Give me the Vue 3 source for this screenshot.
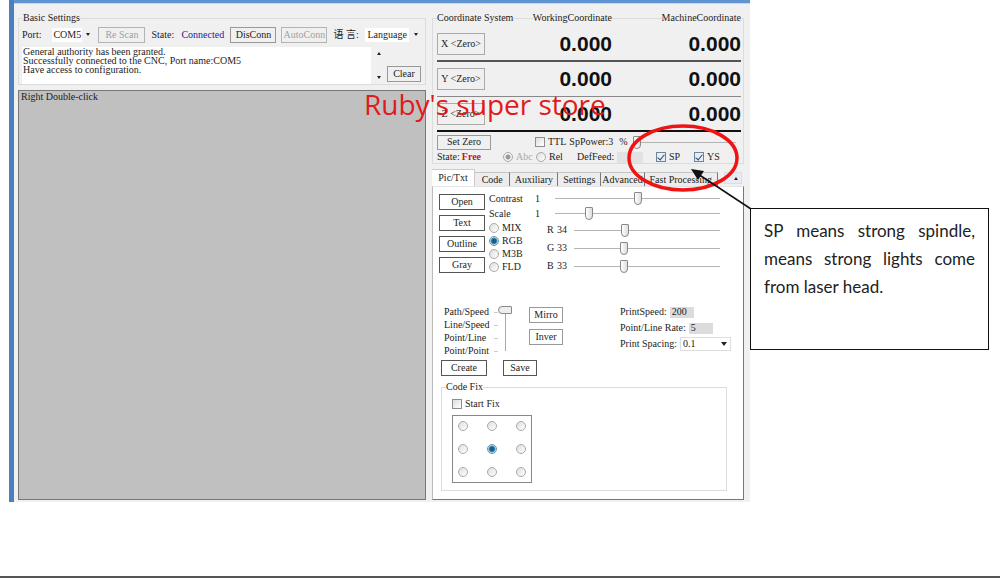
<script setup>
import { ref } from 'vue'

const log = ref(
  'General authority has been granted.\nSuccessfully connected to the CNC, Port name:COM5\nHave access to configuration.'
)
const axes = ['X', 'Y', 'Z']
const tabs = ['Pic/Txt', 'Code', 'Auxiliary', 'Settings', 'Advanced', 'Fast Processing']
const activeTab = ref('Pic/Txt')
const sources = ['Open', 'Text', 'Outline', 'Gray']
const modes = ['MIX', 'RGB', 'M3B', 'FLD']
const mode = ref('RGB')
const adjust = ref([
  { name: 'Contrast', value: 1, pos: 50 },
  { name: 'Scale', value: 1, pos: 19 }
])
const channels = ref([
  { name: 'R', value: 34 },
  { name: 'G', value: 33 },
  { name: 'B', value: 33 }
])
const paths = ['Path/Speed', 'Line/Speed', 'Point/Line', 'Point/Point']
const anchor = ref(5)
const power = ref(0)
const pathLevel = ref(3)
const motion = ref('')
const ttl = ref(false)
const sp = ref(true)
const ys = ref(true)
const startFix = ref(false)
</script>

<template>
  <div class="page">
    <main class="sheet">
      <div class="window">
        <div class="left">
          <section class="group basic">
            <header class="group-head"><h2>Basic Settings</h2></header>
            <div class="port-row">
              <label for="port">Port:</label>
              <span class="combo port">
                <select id="port"><option>COM5</option></select>
                <i class="caret"></i>
              </span>
              <button class="btn scan" disabled>Re Scan</button>
              <span class="state">State:</span>
              <span class="connected">Connected</span>
              <button class="btn conn">DisConn</button>
              <button class="btn conn" disabled>AutoConn</button>
              <label for="lang" class="lang-label">语 言:</label>
              <span class="combo lang">
                <select id="lang"><option>Language</option></select>
                <i class="caret"></i>
              </span>
            </div>
            <div class="log-row">
              <textarea v-model="log" aria-label="Log" readonly></textarea>
              <div class="scroll"><i class="caret up"></i><i class="caret"></i></div>
              <button class="btn clear">Clear</button>
            </div>
          </section>
          <div class="canvas">Right Double-click</div>
        </div>

        <div class="right">
          <section class="group coords">
            <header class="group-head">
              <h2>Coordinate System</h2>
              <span>WorkingCoordinate</span>
              <span>MachineCoordinate</span>
            </header>
            <div v-for="a in axes" :key="a" class="axis">
              <button class="btn zero">{{ a }} &lt;Zero&gt;</button>
              <output>0.000</output>
              <output>0.000</output>
            </div>
            <div class="power-row">
              <button class="btn set-zero">Set Zero</button>
              <label class="opt"><input v-model="ttl" type="checkbox" />TTL</label>
              <label for="power" class="power-label">SpPower:</label>
              <span class="num">3</span>
              <span class="pct">%</span>
              <input id="power" v-model="power" type="range" class="range" />
            </div>
            <div class="state-row">
              <span>State:<b class="free">Free</b></span>
              <label class="opt abs"><input v-model="motion" type="radio" name="motion" value="abc" disabled class="dim" />Abc</label>
              <label class="opt rel"><input v-model="motion" type="radio" name="motion" value="rel" />Rel</label>
              <label for="feed" class="feed-label">DefFeed:</label>
              <input id="feed" class="field feed" />
              <label class="opt sp"><input v-model="sp" type="checkbox" />SP</label>
              <label class="opt"><input v-model="ys" type="checkbox" />YS</label>
            </div>
          </section>

          <nav class="tabs" role="tablist">
            <button
              v-for="t in tabs"
              :key="t"
              role="tab"
              :aria-selected="activeTab === t"
              :class="['tab', { active: activeTab === t }]"
              @click="activeTab = t"
            >{{ t }}</button>
            <button class="tab-next" aria-label="Next tabs"><i class="caret up"></i></button>
          </nav>

          <section class="panel">
            <div class="image-tools">
              <div class="sources">
                <button v-for="s in sources" :key="s" class="btn strong">{{ s }}</button>
              </div>
              <div class="settings">
                <label v-for="a in adjust" :key="a.name" class="adjust">
                  <span>{{ a.name }}</span><span>{{ a.value }}</span>
                  <input v-model="a.pos" type="range" class="range" />
                </label>
                <div class="colours">
                  <div class="modes">
                    <label v-for="m in modes" :key="m" class="opt">
                      <input v-model="mode" type="radio" name="mode" :value="m" />{{ m }}
                    </label>
                  </div>
                  <div class="channels">
                    <label v-for="c in channels" :key="c.name" class="channel">
                      <span>{{ c.name }}</span><span>{{ c.value }}</span>
                      <input v-model="c.value" type="range" class="range" />
                    </label>
                  </div>
                </div>
              </div>
            </div>

            <div class="print-tools">
              <div class="paths"><span v-for="p in paths" :key="p">{{ p }}</span></div>
              <div class="ticks"><i v-for="p in paths" :key="p"></i></div>
              <input v-model="pathLevel" type="range" min="0" max="3" class="vertical" aria-label="Path mode" />
              <div class="flips">
                <button class="btn">Mirro</button>
                <button class="btn">Inver</button>
              </div>
              <div class="print">
                <div><label for="speed">PrintSpeed:</label><input id="speed" class="field" value="200" /></div>
                <div><label for="rate">Point/Line Rate:</label><input id="rate" class="field" value="5" /></div>
                <div>
                  <label for="spacing">Print Spacing:</label>
                  <span class="combo spacing">
                    <select id="spacing"><option>0.1</option></select>
                    <i class="caret big"></i>
                  </span>
                </div>
              </div>
            </div>

            <div class="actions">
              <button class="btn strong create">Create</button>
              <button class="btn strong save">Save</button>
            </div>

            <section class="group fix">
              <header class="group-head"><h2>Code Fix</h2></header>
              <label class="opt"><input v-model="startFix" type="checkbox" />Start Fix</label>
              <div class="anchors">
                <input v-for="n in 9" :key="n" v-model="anchor" type="radio" name="anchor" :value="n" :aria-label="'Anchor ' + n" />
              </div>
            </section>
          </section>
        </div>
      </div>

      <aside class="callout">SP means strong spindle, means strong lights come from laser head.</aside>

      <p class="watermark">Ruby's super store</p>
      <svg class="marks" viewBox="0 0 160 100" aria-hidden="true">
        <ellipse cx="63" cy="38" rx="54" ry="32" fill="none" stroke="#ef1414" stroke-width="3.500" />
        <path d="M78 54 L131 89" stroke="#111" stroke-width="1.500" />
        <path d="M71 49 L84 51 L78 60 Z" fill="#111" />
      </svg>
    </main>
    <hr class="rule" />
  </div>
</template>

<style>
body {
  background: #fff;
}
</style>

<style scoped>
.page {
  min-height: 100vh;
  display: flex;
  flex-direction: column;
  justify-content: space-between;
  font: 10px/12px "Liberation Serif", "Noto Sans CJK SC", serif;
  color: #1c1c1c;
}
.page * {
  box-sizing: border-box;
}
.sheet {
  position: relative;
  display: grid;
  grid-template-columns: minmax(0, 741fr) minmax(0, 239fr);
  align-items: start;
  padding: 0 11px 0 9px;
}
.window {
  min-width: 0;
  display: grid;
  grid-template-columns: 408fr 312fr;
  column-gap: 6px;
  padding: 14px 6px 2px 4px;
  background: #f0f0f0;
  border-left: 5px solid #4a80c0;
  box-shadow: inset 0 3px #5f93d2, inset 0 4px #c5d8ee;
}
.left,
.right {
  min-width: 0;
  display: flex;
  flex-direction: column;
}
h2 {
  margin: 0;
  font: inherit;
}
button,
input,
select,
textarea {
  font: inherit;
  color: inherit;
  margin: 0;
}
.group {
  border: 1px solid #dcdcdc;
  margin-top: 4px;
}
.group-head {
  display: flex;
  margin-top: -7px;
  padding-left: 4px;
}
.group-head > * {
  background: #f0f0f0;
}
.btn {
  height: 16px;
  padding: 0;
  line-height: 12px;
  text-align: center;
  white-space: nowrap;
  background: transparent;
  border: 1px solid #999;
}
.btn:disabled {
  color: #a0a0a0;
  border-color: #b4b4b4;
}
.btn.strong {
  border-color: #555;
}
.caret {
  width: 0;
  height: 0;
  border: 2px solid transparent;
  border-top: 3px solid #222;
  border-bottom: 0;
}
.caret.up {
  border-top: 0;
  border-bottom: 3px solid #222;
}
.caret.big {
  border-width: 4px 3px 0;
}
.combo {
  display: flex;
  align-items: center;
  justify-content: space-between;
}
select {
  appearance: none;
  border: 0;
  border-radius: 0;
  padding: 0 2px;
  height: 14px;
  background: #fff;
}

/* Basic settings */
.basic {
  height: 67px;
  padding: 0 4px 0 3px;
}
.port-row {
  display: flex;
  align-items: center;
  height: 21px;
  white-space: nowrap;
}
.basic .group-head {
  padding-left: 1px;
}
.port {
  width: 38px;
  margin: 0 8px 0 11px;
}
.port select {
  width: 30px;
  padding: 0 0 0 1px;
}
.scan {
  width: 47px;
}
.state {
  margin: 0 6px;
  width: 24px;
}
.connected {
  color: #1a1a9c;
  width: 49px;
}
.conn {
  width: 46px;
  margin-right: 5px;
}
.lang-label {
  width: 32px;
  margin-left: 1px;
}
.lang {
  flex: 1;
  padding-right: 3px;
}
.lang select {
  width: 44px;
}
.log-row {
  display: flex;
  height: 37px;
  margin-top: 2px;
}
textarea {
  flex: 1;
  min-width: 0;
  border: 0;
  padding: 0 1px;
  resize: none;
  overflow: hidden;
  background: #fff;
  line-height: 9px;
  outline: 0;
}
.scroll {
  width: 16px;
  display: flex;
  flex-direction: column;
  align-items: center;
  justify-content: space-between;
  padding: 5px 0;
}
.clear {
  width: 34px;
  align-self: flex-end;
  margin-bottom: 2px;
}
.canvas {
  flex: 1;
  margin-top: 5px;
  padding: 0 2px;
  background: #c0c0c0;
  border: 1px solid #777;
}

/* Coordinates */
.coords {
  height: 146px;
  padding: 0 2px 0 4px;
}
.coords .group-head {
  display: grid;
  grid-template-columns: 90fr 85fr 129fr;
  padding-left: 0;
  margin-bottom: 3px;
}
.group-head span {
  justify-self: end;
}
.group-head h2 {
  justify-self: start;
}
.axis {
  display: grid;
  grid-template-columns: 48fr 127fr 129fr;
  height: 35px;
  align-items: center;
  border-bottom: 2px solid #555;
}
.axis:nth-child(3) {
  border-bottom: 1px solid #888;
}
.axis:nth-child(4) {
  border-color: #111;
}
.zero {
  width: 48px;
  height: 22px;
  border-color: #aaa;
}
output {
  text-align: right;
  font: bold 21px/24px "Liberation Sans", sans-serif;
  color: #111;
}
.power-row,
.state-row {
  display: flex;
  align-items: center;
  white-space: nowrap;
}
.power-row {
  height: 20px;
  padding-right: 5px;
}
.set-zero {
  width: 54px;
  height: 15px;
  margin-right: 44px;
}
.power-label {
  width: 39px;
  margin-left: 3px;
}
.num {
  width: 11px;
}
.pct {
  width: 14px;
}
.opt {
  display: flex;
  align-items: center;
  gap: 3px;
}
input[type="checkbox"],
input[type="radio"] {
  appearance: none;
  flex: none;
  width: 10px;
  height: 10px;
  border: 1px solid #8e8e8e;
  background: linear-gradient(135deg, #ddd, #fff);
}
input[type="radio"] {
  border-radius: 50%;
  border-color: #aaa;
}
input[type="radio"]:checked {
  border-color: #6f93a8;
  background: radial-gradient(#155f8e 2px, #4f9cc4 3px, #e4f1f7 4px);
}
input[type="radio"].dim {
  background: radial-gradient(#999 2px, #f4f4f4 3px);
  border-color: #aaa;
}
input[type="checkbox"]:checked {
  display: grid;
  place-items: center;
  border-color: #6c8599;
  background: #e6edf3;
}
input[type="checkbox"]:checked::before {
  content: "";
  width: 3px;
  height: 6px;
  margin-bottom: 2px;
  border: solid #2b4871;
  border-width: 0 1px 1px 0;
  transform: rotate(40deg);
}
.state-row {
  height: 10px;
}
.state-row > :first-child {
  width: 66px;
}
.free {
  color: #c41818;
  margin-left: 2px;
}
.abs {
  width: 33px;
  color: #aaa;
}
.rel {
  width: 41px;
}
.feed-label {
  width: 40px;
}
.field {
  border: 0;
  border-radius: 0;
  padding: 0 2px;
  width: 24px;
  height: 11px;
  background: #dcdcdc;
}
.feed {
  width: 26px;
  background: #e2e2e2;
}
.sp {
  margin-left: 13px;
  width: 38px;
}

/* Sliders */
.range {
  appearance: none;
  flex: 1;
  min-width: 0;
  height: 14px;
  background: linear-gradient(#b4b4b4, #b4b4b4) center / 100% 1px no-repeat;
}
.range::-webkit-slider-thumb {
  appearance: none;
  width: 8px;
  height: 13px;
  border: 1px solid #888;
  border-radius: 1px 1px 4px 4px;
  background: linear-gradient(90deg, #fff, #ddd);
}

/* Tabs */
.tabs {
  display: flex;
  align-items: flex-end;
  height: 18px;
  margin-top: 4px;
}
.tab {
  height: 14px;
  padding: 0;
  white-space: nowrap;
  border: 1px solid #c4c4c4;
  border-width: 1px 1px 0 0;
  border-right-color: #777;
  background: #ededed;
  flex: 43 1 0;
}
.tab.active {
  height: 17px;
  background: #fff;
  border-color: #ccc;
}
.tab:nth-child(2) {
  flex-grow: 35;
}
.tab:nth-child(3) {
  flex-grow: 48;
}
.tab:nth-child(6) {
  flex-grow: 74;
}
.tab-next {
  width: 18px;
  height: 12px;
  margin: 0 2px 2px 6px;
  padding: 0 3px 0 0;
  display: flex;
  align-items: center;
  justify-content: flex-end;
  border: 1px solid #ddd;
  background: #e8ecf2;
}
.panel {
  flex: 1;
  padding: 7px 6px 8px;
  background: #fff;
  border: 1px solid #bbb;
  border-top-color: #e4e4e4;
  border-right-color: #777;
  border-bottom-color: #777;
}
.image-tools {
  display: flex;
  gap: 4px;
}
.sources {
  display: flex;
  flex-direction: column;
  gap: 5px;
  width: 46px;
}
.settings {
  flex: 1;
  padding-right: 17px;
  margin-top: -3px;
}
.adjust {
  display: flex;
  align-items: center;
  height: 15px;
}
.adjust > :first-child {
  width: 46px;
}
.adjust > :nth-child(2) {
  width: 20px;
}
.colours {
  display: flex;
}
.modes {
  width: 58px;
}
.modes .opt {
  height: 13px;
}
.channels {
  flex: 1;
}
.channel {
  display: flex;
  align-items: center;
  height: 18px;
}
.channel > :first-child {
  width: 10px;
}
.channel > :nth-child(2) {
  width: 17px;
}
.print-tools {
  display: flex;
  margin-top: 31px;
  padding: 0 6px 0 5px;
}
.paths {
  width: 50px;
  display: grid;
  grid-auto-rows: 13px;
}
.ticks {
  width: 4px;
  display: grid;
  grid-auto-rows: 13px;
}
.ticks i {
  align-self: center;
  height: 1px;
  background: #ccc;
}
.vertical {
  appearance: none;
  writing-mode: vertical-lr;
  direction: rtl;
  width: 14px;
  height: 48px;
  background: linear-gradient(#aaa, #aaa) center / 1px 90% no-repeat;
}
.vertical::-webkit-slider-thumb {
  appearance: none;
  width: 14px;
  height: 8px;
  border: 1px solid #888;
  border-radius: 4px 1px 1px 4px;
  background: #eee;
}
.flips {
  display: flex;
  flex-direction: column;
  gap: 6px;
  width: 34px;
  margin: 1px auto 0 17px;
}
.print {
  width: 111px;
  display: grid;
  grid-auto-rows: 16px;
  margin-top: -2px;
}
.print > div {
  display: flex;
  align-items: center;
  white-space: nowrap;
  gap: 3px;
}
.spacing {
  flex: 1;
  border: 1px solid #ddd;
  padding-right: 3px;
}
.spacing select {
  height: 12px;
  min-width: 0;
}
.actions {
  display: flex;
  gap: 16px;
  margin: 2px 0 0 2px;
}
.create {
  width: 46px;
}
.save {
  width: 34px;
}
.fix {
  margin: 11px 10px 0 2px;
  height: 104px;
  padding-left: 10px;
}
.fix .group-head {
  margin-left: -6px;
  padding: 0;
}
.fix .group-head > * {
  background: #fff;
}
.fix .opt {
  margin-top: 5px;
}
.anchors {
  display: grid;
  grid-template-columns: repeat(3, auto);
  place-content: space-between;
  padding: 5px;
  width: 80px;
  height: 68px;
  margin-top: 5px;
  border: 1px solid #888;
}

/* Annotations over the window */
.callout {
  min-height: 142px;
  margin-top: 208px;
  padding: 8px 13px;
  border: 1px solid #111;
  font: 17px/28px Lato, sans-serif;
  text-align: justify;
  color: #222;
}
.watermark {
  position: absolute;
  left: 364px;
  top: 86px;
  margin: 0;
  font: 28px/36px "Open Sans", sans-serif;
  color: #e01b1b;
  white-space: nowrap;
}
.marks {
  position: absolute;
  left: 620px;
  top: 120px;
  width: 160px;
  height: 100px;
  pointer-events: none;
}
.rule {
  width: 100%;
  height: 2px;
  margin: 0;
  border: 0;
  background: #555;
}
</style>
